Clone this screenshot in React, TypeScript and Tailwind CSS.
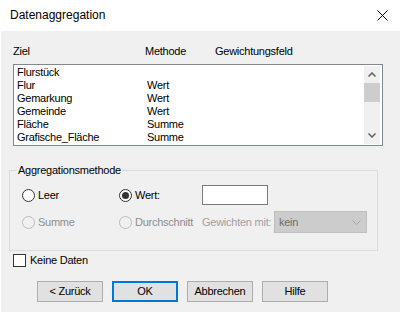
const rows: [string, string][] = [
  ["Flurstück", ""],
  ["Flur", "Wert"],
  ["Gemarkung", "Wert"],
  ["Gemeinde", "Wert"],
  ["Fläche", "Summe"],
  ["Grafische_Fläche", "Summe"],
];

function Radio({ checked, disabled }: { checked?: boolean; disabled?: boolean }) {
  return (
    <span
      className={`flex h-[13px] w-[13px] shrink-0 items-center justify-center rounded-full border ${
        disabled ? "border-[#bcbcbc] bg-[#f0f0f0]" : "border-[#333333] bg-white"
      }`}
    >
      {checked && <span className="h-[7px] w-[7px] rounded-full bg-[#333333]" />}
    </span>
  );
}

function Button({ label, primary }: { label: string; primary?: boolean }) {
  return (
    <div
      className={`flex h-[21px] w-[66px] items-center justify-center bg-[#e1e1e1] ${
        primary ? "border-2 border-[#0078d7]" : "border border-[#adadad]"
      }`}
    >
      {label}
    </div>
  );
}

export default function App() {
  return (
    <div className="h-[315px] w-[400px] overflow-hidden bg-white font-['Liberation_Sans',Arial,sans-serif] text-[11px] leading-[13px] tracking-[-0.25px] text-black">
      <div className="flex h-[31px] items-center justify-between pl-[10px] pr-[12px] tracking-normal">
        <span className="text-[12px]">Datenaggregation</span>
        <svg width="11" height="11" viewBox="0 0 11 11">
          <path d="M0.5 0.5L10.5 10.5M10.5 0.5L0.5 10.5" stroke="#000" strokeWidth="1" />
        </svg>
      </div>

      <div className="ml-[1px] flex h-[281px] w-[399px] flex-col bg-[#f0f0f0]">
        <div className="mt-[14px] flex pl-[12px]">
          <span className="w-[132px]">Ziel</span>
          <span className="w-[70px]">Methode</span>
          <span>Gewichtungsfeld</span>
        </div>

        <div className="ml-[12px] mt-[6px] flex h-[82px] w-[370px] border border-[#828790] bg-white">
          <div className="flex-1 pl-[3px] pt-[1px]">
            {rows.map(([name, method]) => (
              <div key={name} className="flex h-[13px]">
                <span className="w-[130px]">{name}</span>
                <span>{method}</span>
              </div>
            ))}
          </div>
          <div className="my-[1px] mr-[2px] flex w-[16px] flex-col bg-[#f0f0f0]">
            <div className="flex h-[17px] items-center justify-center">
              <svg width="8" height="5" viewBox="0 0 8 5">
                <path d="M0.5 4.5L4 1L7.5 4.5" fill="none" stroke="#606060" strokeWidth="1.5" />
              </svg>
            </div>
            <div className="h-[19px] bg-[#cdcdcd]" />
            <div className="flex-1" />
            <div className="flex h-[17px] items-center justify-center">
              <svg width="8" height="5" viewBox="0 0 8 5">
                <path d="M0.5 0.5L4 4L7.5 0.5" fill="none" stroke="#606060" strokeWidth="1.5" />
              </svg>
            </div>
          </div>
        </div>

        <fieldset className="ml-[8px] mt-[18px] h-[87px] w-[369px] border border-[#dcdcdc]">
          <legend className="ml-[7px] px-[1px] leading-[13px]">Aggregationsmethode</legend>
          <div className="mt-[8px] flex h-[20px] items-center pl-[12px]">
            <div className="flex w-[97px] items-center gap-[3px]">
              <Radio />
              <span>Leer</span>
            </div>
            <div className="flex w-[83px] items-center gap-[3px]">
              <Radio checked />
              <span>Wert:</span>
            </div>
            <div className="h-[20px] w-[66px] border border-[#7a7a7a] bg-white" />
          </div>
          <div className="mt-[6px] flex h-[22px] items-center whitespace-nowrap pl-[12px] text-[#8d8d8d]">
            <div className="flex w-[97px] shrink-0 items-center gap-[3px]">
              <Radio disabled />
              <span>Summe</span>
            </div>
            <div className="flex w-[83px] shrink-0 items-center gap-[3px]">
              <Radio disabled />
              <span>Durchschnitt</span>
            </div>
            <span className="w-[72px] shrink-0 text-[#a0a0a0]">Gewichten mit:</span>
            <div className="flex h-[22px] w-[93px] shrink-0 items-center justify-between border border-[#bfbfbf] bg-[#cccccc] pl-[4px] pr-[5px] text-[#6d6d6d]">
              <span>kein</span>
              <svg width="9" height="5" viewBox="0 0 9 5">
                <path d="M0.5 0.5L4.5 4.5L8.5 0.5" fill="none" stroke="#a8a8a8" strokeWidth="1" />
              </svg>
            </div>
          </div>
        </fieldset>

        <div className="ml-[12px] mt-[3px] flex items-center gap-[4px]">
          <span className="h-[13px] w-[13px] border border-[#333333] bg-white" />
          <span>Keine Daten</span>
        </div>

        <div className="ml-[36px] mt-[14px] flex gap-[9px]">
          <Button label="< Zurück" />
          <Button label="OK" primary />
          <Button label="Abbrechen" />
          <Button label="Hilfe" />
        </div>
      </div>
    </div>
  );
}
